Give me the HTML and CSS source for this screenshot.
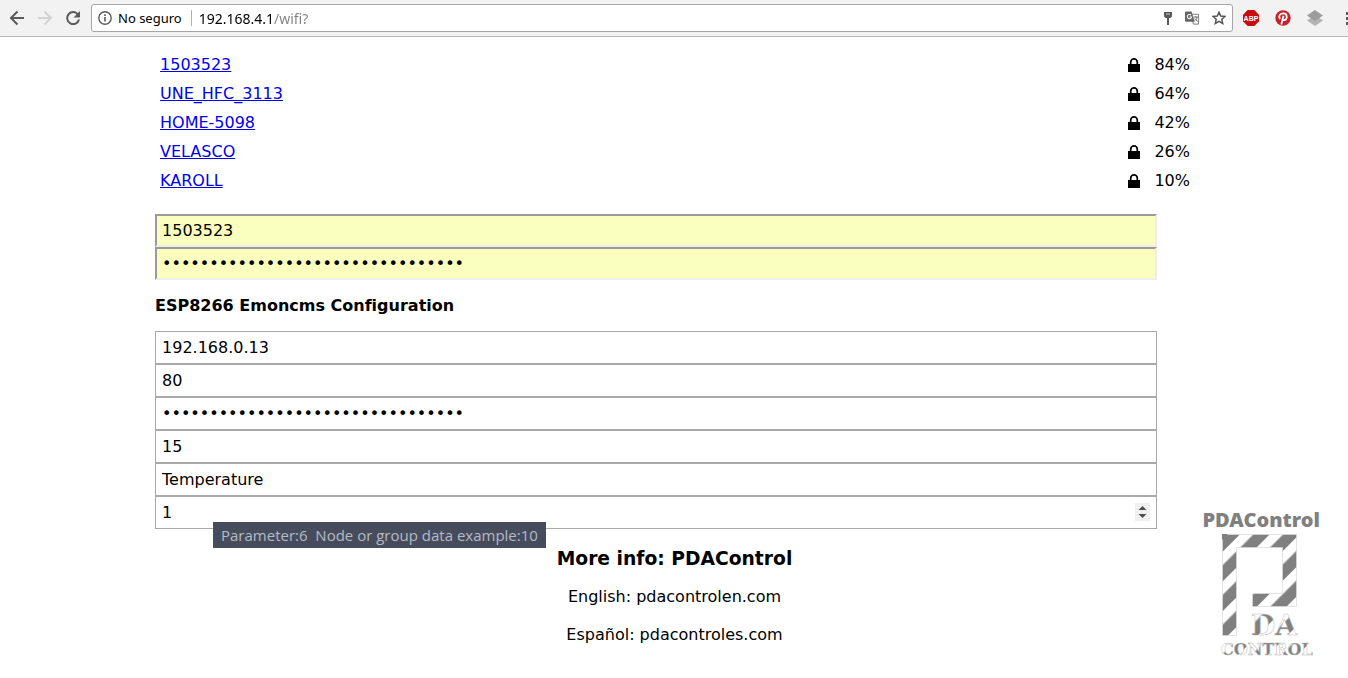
FILE: index.html
```html
<!DOCTYPE html>
<html lang="es">
<head>
    <meta charset="UTF-8">
    <meta name="viewport" content="width=device-width, initial-scale=1.0">
    <title>Config ESP</title>
    <link rel="stylesheet" href="styles.css">
</head>
<body>
    <header class="toolbar">
        <button type="button" class="tool" aria-label="Atrás">
            <svg width="16" height="16" viewBox="0 0 16 16"><path d="M15 8H2.500M8.500 1.500L2 8l6.500 6.500" fill="none" stroke="#5a5a5a" stroke-width="2"/></svg>
        </button>
        <button type="button" class="tool" aria-label="Adelante" disabled>
            <svg width="16" height="16" viewBox="0 0 16 16"><path d="M1 8h12.500M7.500 1.500L14 8l-6.500 6.500" fill="none" stroke="#d3d3d3" stroke-width="2"/></svg>
        </button>
        <button type="button" class="tool" aria-label="Recargar">
            <svg width="16" height="16" viewBox="0 0 16 16"><path d="M13.200 4.800A6 6 0 1 0 14 9.500" fill="none" stroke="#5a5a5a" stroke-width="2"/><path d="M15 1v6.500H8.500z" fill="#5a5a5a"/></svg>
        </button>

        <div class="address-bar">
            <svg width="14" height="14" viewBox="0 0 14 14"><circle cx="7" cy="7" r="6.200" fill="none" stroke="#5a5a5a" stroke-width="1.400"/><path d="M6.200 6h1.600v4.500H6.200zM6.200 3.300h1.600v1.600H6.200z" fill="#5a5a5a"/></svg>
            <span class="security">No seguro</span>
            <input type="text" class="url" value="192.168.4.1/wifi?" aria-label="Dirección">
            <button type="button" class="tool" aria-label="Contraseñas">
                <svg width="10" height="13" viewBox="0 0 10 13"><path d="M1 0h8v4.500L7.500 6H6v7H4V6H2.500L1 4.500z" fill="#5a5a5a"/><path d="M3 1.600h4v1H3z" fill="#ccc"/></svg>
            </button>
            <button type="button" class="tool" aria-label="Traducir">
                <svg width="15" height="14" viewBox="0 0 16 14"><path d="M6 3h8.500v10.500H9z" fill="#fff" stroke="#777"/><path d="M1 0h6l3.300 11H1a1 1 0 0 1-1-1V1a1 1 0 0 1 1-1z" fill="#666"/><path d="M6.500 4A2.300 2.300 0 1 0 7 6H4.800" fill="none" stroke="#fff" stroke-width="1.100"/><path d="M9 6h5M11.500 5v1M13 6c-.5 2-1.500 3-3 4M10.500 7.500l3 3.500" fill="none" stroke="#666"/></svg>
            </button>
            <button type="button" class="tool" aria-label="Favoritos">
                <svg width="14" height="14" viewBox="0 0 14 14"><path d="M7 1.200l1.700 3.900 4.300.4-3.200 2.800.9 4.200L7 10.300l-3.700 2.200.9-4.200L1 5.500l4.300-.4z" fill="none" stroke="#555" stroke-width="1.500"/></svg>
            </button>
        </div>

        <button type="button" class="tool" aria-label="ABP">
            <svg width="16" height="16" viewBox="0 0 16 16"><path d="M4.700 0h6.600L16 4.700v6.600L11.300 16H4.700L0 11.300V4.700z" fill="#c70d0d"/><text x="8" y="11" class="abp">ABP</text></svg>
        </button>
        <button type="button" class="tool" aria-label="Pinterest">
            <svg width="16" height="16" viewBox="0 0 16 16"><circle cx="8" cy="8" r="7.700" fill="#cb2027"/><path d="M5 9C3 5.500 5.300 3.300 8.300 3.300c4.700 0 4.200 6.900.8 6.900-1 0-1.600-.8-1.600-.8M8.500 5.800L6.300 14.500" fill="none" stroke="#fff" stroke-width="1.800"/></svg>
        </button>
        <button type="button" class="tool" aria-label="Capas">
            <svg width="16" height="16" viewBox="0 0 16 16"><path d="M8 5l8 5.500L8 16l-8-5.500z" fill="#b4b4b4"/><path d="M8 0l8 5.500L8 11 0 5.500z" fill="#9c9c9c"/></svg>
        </button>
        <button type="button" class="tool menu" aria-label="Menú">
            <svg width="4" height="14" viewBox="0 0 4 14"><path d="M0 1h4v3H0zM0 6h4v3H0zM0 11h4v3H0z" fill="#5a5a5a"/></svg>
        </button>
    </header>

    <!-- padlock shared by the network rows -->
    <svg class="defs" width="0" height="0">
        <symbol id="lock" viewBox="0 0 12 14">
            <path d="M2.700 7V4.200a3.300 3.300 0 0 1 6.600 0V7" fill="none" stroke="#000" stroke-width="1.700"/>
            <path d="M0 6h12v8H0z"/>
        </symbol>
    </svg>

    <main class="content">
        <div class="networks">
            <div class="network"><a href="#ssid">1503523</a><svg class="lock"><use href="#lock"/></svg><span class="quality">84%</span></div>
            <div class="network"><a href="#ssid">UNE_HFC_3113</a><svg class="lock"><use href="#lock"/></svg><span class="quality">64%</span></div>
            <div class="network"><a href="#ssid">HOME-5098</a><svg class="lock"><use href="#lock"/></svg><span class="quality">42%</span></div>
            <div class="network"><a href="#ssid">VELASCO</a><svg class="lock"><use href="#lock"/></svg><span class="quality">26%</span></div>
            <div class="network"><a href="#ssid">KAROLL</a><svg class="lock"><use href="#lock"/></svg><span class="quality">10%</span></div>
        </div>

        <form>
            <input type="text" id="ssid" class="field saved" value="1503523" aria-label="SSID">
            <input type="password" class="field saved" value="12345678901234567890123456789012" aria-label="Password">

            <h4>ESP8266 Emoncms Configuration</h4>

            <input type="text" class="field" value="192.168.0.13" aria-label="Server">
            <input type="text" class="field" value="80" aria-label="Port">
            <input type="password" class="field" value="12345678901234567890123456789012" aria-label="API key">
            <input type="text" class="field" value="15" aria-label="Interval">
            <input type="text" class="field" value="Temperature" aria-label="Name">
            <div class="node">
                <input type="number" class="field" value="1" aria-label="Node" aria-describedby="node-tip">
                <div class="tooltip" id="node-tip" role="tooltip">Parameter:6&nbsp; Node or group data example:10</div>
            </div>
        </form>

        <div class="info">
            <h3>More info: PDAControl</h3>
            <p>English: pdacontrolen.com</p>
            <p>Español: pdacontroles.com</p>
        </div>
    </main>

    <div class="watermark">
        <div class="brand">PDAControl</div>
        <svg width="94" height="128" viewBox="0 0 94 128">
            <defs>
                <pattern id="stripes" width="21" height="21" patternUnits="userSpaceOnUse" patternTransform="rotate(45)">
                    <rect x="1.500" width="11.500" height="21" fill="#808080"/>
                </pattern>
            </defs>
            <path d="M.5.500h74v72h-44v-13h30v-46h-46v88H.5z" fill="url(#stripes)" stroke="#d8d8d8" stroke-width=".7"/>
            <path d="M0 0h6L0 6z" fill="#808080"/>
            <text x="29" y="101" class="logo-da">DA</text>
            <text x="-1" y="121" class="logo-control">CONTROL</text>
        </svg>
    </div>
</body>
</html>
```
FILE: styles.css
```css
* {
    box-sizing: border-box;
}

body {
    margin: 0;
    background-color: #fff;
    color: #000;
    font-family: "DejaVu Sans", Verdana, sans-serif;
    font-size: 16px;
    line-height: 19px;
    overflow-x: hidden;
}

/* Browser bar */
.toolbar {
    display: flex;
    align-items: center;
    gap: 12px;
    height: 37px;
    padding-left: 9px;
    background-color: #f2f2f2;
    border-bottom: 1px solid #b6b6b6;
    overflow: hidden;
}

.tool {
    display: flex;
    flex-shrink: 0;
    padding: 0;
    border: none;
    background: none;
}

.address-bar ~ .tool {
    margin-right: 4px;
}

.address-bar ~ .menu {
    margin: 0 -2px 0 7px;
}

.address-bar {
    display: flex;
    flex: 1;
    align-items: center;
    gap: 12px;
    height: 28px;
    min-width: 0;
    margin: 0 -2px;
    padding: 0 6px;
    background-color: #fff;
    border: 1px solid #a6a6a6;
    border-radius: 3px;
    font-family: "Noto Sans", sans-serif;
    font-size: 14px;
}

.security {
    margin-left: -6px;
    padding-right: 9px;
    border-right: 1px solid #b0b0b0;
    font-size: 13px;
    line-height: 16px;
    white-space: nowrap;
}

.url {
    flex: 1;
    min-width: 0;
    margin-left: -5px;
    padding: 0;
    border: none;
    outline: none;
    font: inherit;
    /* host in black, path in grey */
    background: linear-gradient(to right, #000 74px, #808080 74px);
    background-clip: text;
    -webkit-background-clip: text;
    color: transparent;
}

.abp {
    fill: #fff;
    font-family: "Liberation Sans", sans-serif;
    font-size: 7px;
    font-weight: bold;
    text-anchor: middle;
}

.defs {
    position: absolute;
}

/* WiFi page */
.content {
    width: 77%;
    margin: 0 auto;
    padding-top: 13px;
}

.networks {
    margin-bottom: 19px;
}

.network {
    display: flex;
    align-items: center;
    height: 29px;
    padding: 0 3px 0 5px;
}

.network a {
    margin-right: auto;
    color: #0000ee;
}

.lock {
    width: 12px;
    height: 14px;
    margin-right: 14px;
}

.field {
    display: block;
    width: 100%;
    height: 33px;
    margin: 0;
    padding: 0 6px;
    border: 1px solid #a9a9a9;
    background-color: #fff;
    color: #000;
    font-family: inherit;
    font-size: 16px;
}

.saved {
    padding: 0 5px;
    border: 2px solid;
    border-color: #9a9a9a #eee #eee #9a9a9a;
    background-color: #faffbd;
}

.field::-webkit-inner-spin-button {
    -webkit-appearance: none;
    width: 15px;
    height: 18px;
    opacity: 1;
    background: #f0f0f0 url("data:image/svg+xml,%3Csvg xmlns='http://www.w3.org/2000/svg' width='15' height='18'%3E%3Cpath d='M3.500 7l4-4 4 4zM3.500 11l4 4 4-4z' fill='%234d4d4d'/%3E%3C/svg%3E") no-repeat;
}

form {
    width: calc(100% - 36px);
}

h4 {
    margin: 16px 0;
    font-size: 16px;
    line-height: 19px;
}

.node {
    position: relative;
}

.tooltip {
    position: absolute;
    top: 26px;
    left: 58px;
    padding: 0 8px;
    background-color: #474c5c;
    color: #b4bac8;
    font-family: "Open Sans", sans-serif;
    font-size: 15px;
    line-height: 26px;
    white-space: nowrap;
}

.info {
    padding-left: 1px;
    text-align: center;
}

.info h3 {
    margin: 19px 0 17px;
    line-height: 22px;
}

.info p {
    margin: 0 0 19px;
}

/* Logo over the page corner */
.watermark {
    position: absolute;
    right: 28px;
    bottom: 16px;
    color: #808080;
}

.watermark svg {
    display: block;
    margin-left: 20px;
    overflow: visible;
}

.brand {
    margin-bottom: 3px;
    font-family: "Noto Sans", sans-serif;
    font-size: 20px;
    font-weight: 900;
    line-height: 22px;
}

.logo-da,
.logo-control {
    fill: url(#stripes);
    stroke: #bbb;
    stroke-width: .5px;
    font-family: "DejaVu Serif", serif;
    font-size: 28px;
    font-weight: bold;
}

.logo-control {
    font-size: 16px;
}
```
